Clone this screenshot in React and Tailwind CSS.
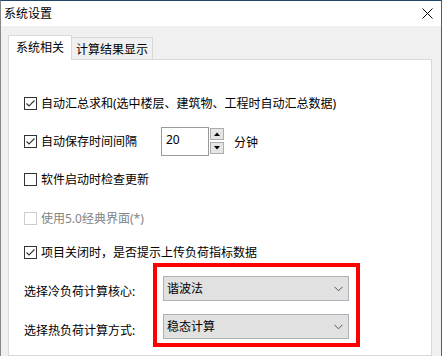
import React from 'react';

const Check = ({ checked, disabled }) => (
  <span
    className={`flex h-[13px] w-[13px] shrink-0 items-center justify-center border bg-white ${
      disabled ? 'border-[#cccccc]' : 'border-[#333333]'
    }`}
  >
    {checked && (
      <svg width="11" height="11" viewBox="0 0 11 11">
        <path d="M1.5 5.5 L4 8 L9.5 2.5" fill="none" stroke="#333" strokeWidth="1.1" />
      </svg>
    )}
  </span>
);

const Option = ({ checked, disabled, children, className = '' }) => (
  <div className={`flex items-center ${className}`}>
    <Check checked={checked} disabled={disabled} />
    <span className={`ml-[4px] whitespace-nowrap ${disabled ? 'text-[#838383]' : 'text-black'}`}>
      {children}
    </span>
  </div>
);

const Combo = ({ value }) => (
  <div className="flex h-[25px] items-center justify-between border border-[#acb2b8] bg-[#e1e1e1] pl-[3px] pr-[5px]">
    <span>{value}</span>
    <svg width="9" height="6" viewBox="0 0 9 6">
      <path d="M0.5 0.8 L4.5 4.8 L8.5 0.8" fill="none" stroke="#555" strokeWidth="1" />
    </svg>
  </div>
);

const SpinBtn = ({ up }) => (
  <div className="flex h-[12px] w-[14px] items-center justify-center border border-[#adadad] bg-[#e5e5e5]">
    <svg width="6" height="4" viewBox="0 0 6 4">
      <path d={up ? 'M0 4 L3 0.5 L6 4 Z' : 'M0 0 L3 3.5 L6 0 Z'} fill="#000" />
    </svg>
  </div>
);

export default function App() {
  return (
    <div className="flex h-[356px] w-[442px] flex-col overflow-hidden border-l border-r border-t border-l-[#888888] border-r-[#5a5a5a] border-t-[#22456a] bg-[#f0f0f0] font-[family-name:'Noto_Sans','Noto_Sans_CJK_SC',sans-serif] text-[12px] leading-[16px] text-black">
      {/* title bar */}
      <div className="flex h-[25px] shrink-0 items-center justify-between bg-white pl-[3px] pr-[8px]">
        <span>系统设置</span>
        <svg width="11" height="11" viewBox="0 0 11 11">
          <path d="M0.5 0.5 L10.5 10.5 M10.5 0.5 L0.5 10.5" stroke="#000" strokeWidth="1" />
        </svg>
      </div>

      <div className="flex flex-1 flex-col pl-[7px] pr-[9px] pt-[9px]">
        {/* tabs */}
        <div className="flex items-end">
          <div className="relative z-10 -mb-px flex h-[25px] w-[64px] items-center justify-center border border-b-0 border-[#d9d9d9] bg-white pb-[1px]">
            系统相关
          </div>
          <div className="flex h-[22px] w-[81px] items-center justify-center border border-b-0 border-l-0 border-[#d9d9d9] bg-[#f0f0f0] pt-[2px]">
            计算结果显示
          </div>
        </div>

        {/* panel */}
        <div className="flex flex-1 flex-col border border-[#d9d9d9] bg-white pl-[15px]">
          <Option checked className="mt-[37px] h-[13px]">
            自动汇总求和(选中楼层、建筑物、工程时自动汇总数据)
          </Option>

          <div className="mt-[17px] flex h-[29px] items-center">
            <Check checked />
            <span className="ml-[4px] w-[96px] whitespace-nowrap">自动保存时间间隔</span>
            <div className="ml-[24px] flex h-[29px]">
              <div className="w-[48px] border border-[#9a9a9a] pl-[4px] pt-[4px]">20</div>
              <div className="ml-px flex flex-col gap-[2px] pt-[1px]">
                <SpinBtn up />
                <SpinBtn />
              </div>
            </div>
            <span className="ml-[10px] mt-[2px]">分钟</span>
          </div>

          <Option className="mt-[17px] h-[13px]">软件启动时检查更新</Option>
          <Option disabled className="mt-[26px] h-[13px]">
            使用5.0经典界面(*)
          </Option>
          <Option checked className="mt-[21px] h-[13px]">
            项目关闭时，是否提示上传负荷指标数据
          </Option>

          {/* calc core selection */}
          <div className="mt-[4px] flex">
            <div className="flex w-[129px] flex-col pt-[21px]">
              <span>选择冷负荷计算核心:</span>
              <span className="mt-[23px]">选择热负荷计算方式:</span>
            </div>
            <div className="flex w-[207px] flex-col gap-[13px] border-4 border-[#ff0000] pb-[4px] pl-[6px] pr-[7px] pt-[9px]">
              <Combo value="谐波法" />
              <Combo value="稳态计算" />
            </div>
          </div>
        </div>
      </div>
    </div>
  );
}
